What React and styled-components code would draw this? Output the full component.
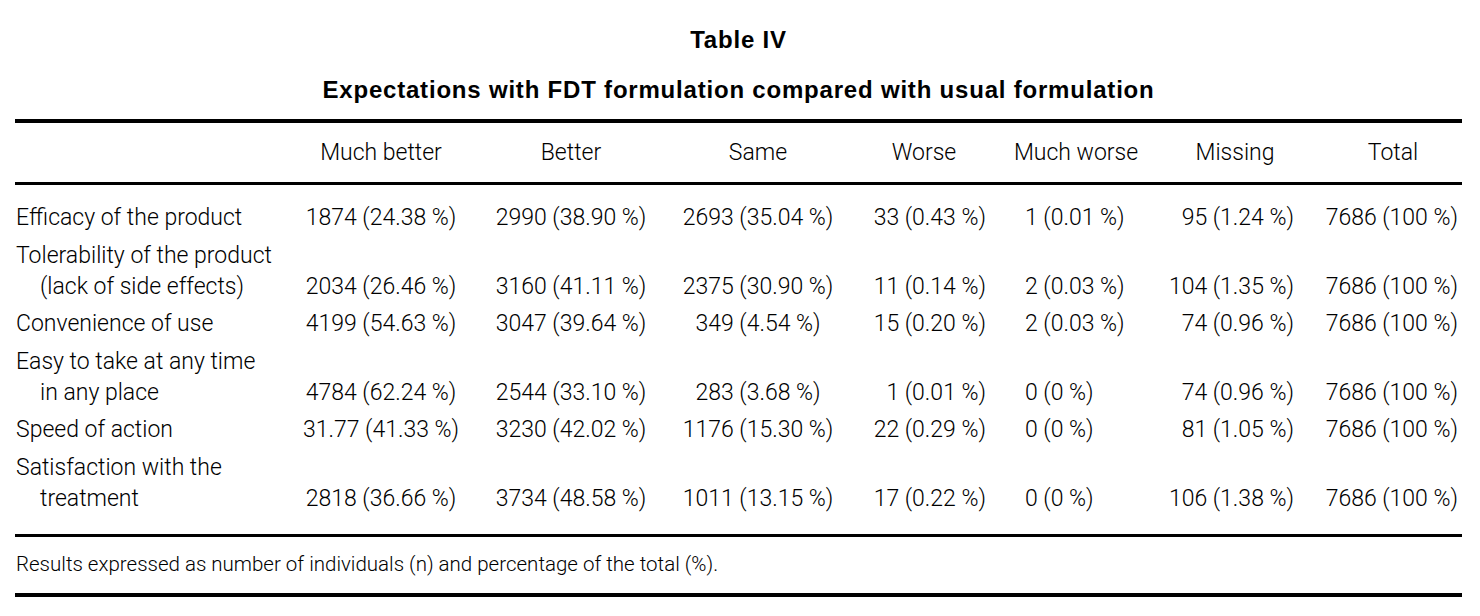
import React from 'react';
import styled, { createGlobalStyle } from 'styled-components';

const GlobalStyle = createGlobalStyle`
  html, body {
    margin: 0;
    padding: 0;
    background: #fff;
  }

  body {
    color: #000;
    font-family: Roboto, "Liberation Sans", Arial, sans-serif;
  }
`;

const Page = styled.div`
  width: 1447px;
  padding: 0 0 0 15px;
`;

const Caption = styled.div`
  display: flex;
  flex-direction: column;
  align-items: center;
  font-family: "Liberation Sans", Arial, sans-serif;
  font-weight: 700;
  font-size: 24px;
  line-height: 28px;
  letter-spacing: 0.8px;
  padding-top: 26px;
  margin-bottom: 15px;

  h2, h3 {
    margin: 0;
    font-size: inherit;
  }

  h3 {
    margin-top: 22px;
  }
`;

const Rule = styled.div`
  height: ${(p) => p.$weight || 4}px;
  background: #000;
`;

const Grid = styled.div`
  display: grid;
  grid-template-columns: 275px 182px 198px 176px 156px 148px 160px 152px;
  font-weight: 300;
  font-size: 23px;
  line-height: 31px;
`;

const HeadRow = styled(Grid)`
  height: 59px;
  align-items: center;
`;

const Body = styled(Grid)`
  row-gap: 6.5px;
  padding: 17px 0 20px;
  align-items: end;
`;

const Cell = styled.div`
  text-align: ${(p) => p.$align || 'center'};
  padding-left: ${(p) => p.$left || 0}px;
  padding-right: ${(p) => p.$right || 0}px;
  white-space: nowrap;
`;

const Label = styled.div`
  padding-left: 1px;
  white-space: nowrap;

  span {
    display: block;
    padding-left: 24px;
  }
`;

const Note = styled.p`
  margin: 0;
  padding: 14px 0 15px 1px;
  font-weight: 300;
  font-size: 20.5px;
  line-height: 27px;
`;

const columns = [
  { title: 'Much better' },
  { title: 'Better' },
  { title: 'Same' },
  { title: 'Worse', align: 'right', right: 16 },
  { title: 'Much worse', align: 'left', left: 23 },
  { title: 'Missing', align: 'right', right: 16, head: 10 },
  { title: 'Total', align: 'right', right: 4, head: 14 },
];

const rows = [
  {
    label: ['Efficacy of the product'],
    values: ['1874 (24.38 %)', '2990 (38.90 %)', '2693 (35.04 %)', '33 (0.43 %)', '1 (0.01 %)', '95 (1.24 %)', '7686 (100 %)'],
  },
  {
    label: ['Tolerability of the product', '(lack of side effects)'],
    values: ['2034 (26.46 %)', '3160 (41.11 %)', '2375 (30.90 %)', '11 (0.14 %)', '2 (0.03 %)', '104 (1.35 %)', '7686 (100 %)'],
  },
  {
    label: ['Convenience of use'],
    values: ['4199 (54.63 %)', '3047 (39.64 %)', '349 (4.54 %)', '15 (0.20 %)', '2 (0.03 %)', '74 (0.96 %)', '7686 (100 %)'],
  },
  {
    label: ['Easy to take at any time', 'in any place'],
    values: ['4784 (62.24 %)', '2544 (33.10 %)', '283 (3.68 %)', '1 (0.01 %)', '0 (0 %)', '74 (0.96 %)', '7686 (100 %)'],
  },
  {
    label: ['Speed of action'],
    values: ['31.77 (41.33 %)', '3230 (42.02 %)', '1176 (15.30 %)', '22 (0.29 %)', '0 (0 %)', '81 (1.05 %)', '7686 (100 %)'],
  },
  {
    label: ['Satisfaction with the', 'treatment'],
    values: ['2818 (36.66 %)', '3734 (48.58 %)', '1011 (13.15 %)', '17 (0.22 %)', '0 (0 %)', '106 (1.38 %)', '7686 (100 %)'],
  },
];

class App extends React.Component {
  render() {
    return (
      <Page>
        <GlobalStyle />
        <Caption>
          <h2>Table IV</h2>
          <h3>Expectations with FDT formulation compared with usual formulation</h3>
        </Caption>

        <Rule />
        <HeadRow>
          <div />
          {columns.map((c) => (
            <Cell key={c.title} $left={c.head}>{c.title}</Cell>
          ))}
        </HeadRow>
        <Rule $weight={3} />

        <Body>
          {rows.map((r) => (
            <React.Fragment key={r.label[0]}>
              <Label>
                {r.label[0]}
                {r.label[1] && <span>{r.label[1]}</span>}
              </Label>
              {r.values.map((v, i) => (
                <Cell
                  key={i}
                  $align={columns[i].align}
                  $left={columns[i].left}
                  $right={columns[i].right}
                >
                  {v}
                </Cell>
              ))}
            </React.Fragment>
          ))}
        </Body>

        <Rule $weight={3} />
        <Note>Results expressed as number of individuals (n) and percentage of the total (%).</Note>
        <Rule />
      </Page>
    );
  }
}

export default App;
